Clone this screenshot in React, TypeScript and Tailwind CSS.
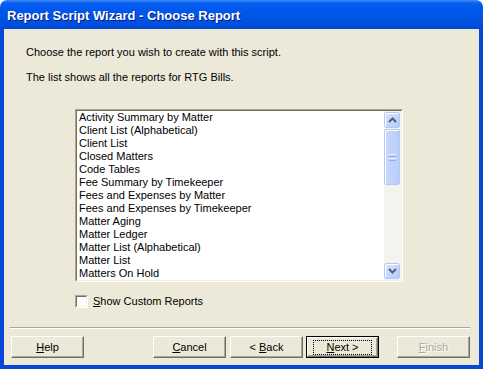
import React from 'react';

const reports = [
  'Activity Summary by Matter',
  'Client List (Alphabetical)',
  'Client List',
  'Closed Matters',
  'Code Tables',
  'Fee Summary by Timekeeper',
  'Fees and Expenses by Matter',
  'Fees and Expenses by Timekeeper',
  'Matter Aging',
  'Matter Ledger',
  'Matter List (Alphabetical)',
  'Matter List',
  'Matters On Hold',
];

// classic raised push button
const Button: React.FC<{ children: React.ReactNode; disabled?: boolean; isDefault?: boolean }> = ({
  children,
  disabled,
  isDefault,
}) => {
  const inner = (
    <div className="flex h-full w-full items-center justify-center border border-t-white border-l-white border-r-[#716F64] border-b-[#716F64] bg-[#ECE9D8] shadow-[inset_-1px_-1px_0_#ACA899]">
      {isDefault ? (
        <span className="flex h-[15px] w-[59px] items-center justify-center border border-dotted border-black">
          {children}
        </span>
      ) : (
        <span className={disabled ? 'text-[#ACA899] [text-shadow:1px_1px_0_#fff]' : ''}>{children}</span>
      )}
    </div>
  );
  if (isDefault) {
    return <div className="h-[22px] w-[73px] border border-black">{inner}</div>;
  }
  return <div className="h-[22px] w-[73px]">{inner}</div>;
};

const ScrollButton: React.FC<{ up?: boolean }> = ({ up }) => (
  <div className="flex h-[16px] w-[16px] items-center justify-center rounded-[2px] border border-[#B4C8F6] bg-[linear-gradient(135deg,#D8E4FD,#B6CBF8)] shadow-[inset_1px_1px_0_#fff]">
    <svg width="9" height="6" viewBox="0 0 9 6">
      <path
        d={up ? 'M1 5 L4.5 1.5 L8 5' : 'M1 1 L4.5 4.5 L8 1'}
        fill="none"
        stroke="#4D6185"
        strokeWidth="2"
      />
    </svg>
  </div>
);

const App: React.FC = () => {
  return (
    <div className="flex h-[369px] w-[483px] flex-col bg-white font-['Liberation_Sans',Arial,sans-serif] text-[11px] leading-[13px] text-black">
      {/* Title bar */}
      <div className="flex h-[29px] items-center rounded-t-[7px] bg-[linear-gradient(to_bottom,#3C8CF9_0%,#0A5FEE_10%,#0058EE_25%,#0055E5_60%,#0050DD_85%,#0046CF_100%)] pl-[7px] pt-[2px]">
        <span className="text-[13px] font-bold text-white [text-shadow:1px_1px_0_#0A1883]">
          Report Script Wizard - Choose Report
        </span>
      </div>

      {/* Body */}
      <div className="flex flex-1 flex-col border-x-4 border-b-4 border-[#0846D8] bg-[#ECE9D8]">
        <div className="pl-[22px] pt-[17px]">
          <p>Choose the report you wish to create with this script.</p>
          <p className="mt-[12px]">The list shows all the reports for RTG Bills.</p>
        </div>

        {/* Report list */}
        <div className="ml-[71px] mt-[25px] h-[173px] w-[328px] border border-t-[#ACA899] border-l-[#ACA899] border-b-white border-r-white">
          <div className="flex h-full w-full border border-t-[#716F64] border-l-[#716F64] border-b-[#F1EFE2] border-r-[#F1EFE2] bg-white">
            <ul className="flex-1 overflow-hidden pl-[2px]">
              {reports.map((r) => (
                <li key={r} className="h-[13px] whitespace-nowrap">
                  {r}
                </li>
              ))}
            </ul>
            <div className="flex w-[17px] flex-col bg-[#F4F3EE] pt-[1px] pb-[1px]">
              <ScrollButton up />
              <div className="mt-[1px] flex h-[56px] w-[16px] items-center justify-center rounded-[2px] border border-[#B4C8F6] bg-[linear-gradient(to_right,#C9D8FC,#B8CCF9)] shadow-[inset_1px_1px_0_#fff]">
                <div className="flex flex-col gap-[1px]">
                  <div className="h-[1px] w-[7px] bg-[#EEF4FE]" />
                  <div className="h-[1px] w-[7px] bg-[#8CB0F8]" />
                  <div className="h-[1px] w-[7px] bg-[#EEF4FE]" />
                  <div className="h-[1px] w-[7px] bg-[#8CB0F8]" />
                </div>
              </div>
              <div className="flex-1" />
              <ScrollButton />
            </div>
          </div>
        </div>

        {/* Checkbox */}
        <div className="ml-[71px] mt-[13px] flex items-center gap-[5px]">
          <div className="h-[13px] w-[13px] border border-t-[#ACA899] border-l-[#ACA899] border-b-white border-r-white">
            <div className="h-full w-full border border-t-[#716F64] border-l-[#716F64] border-b-[#F1EFE2] border-r-[#F1EFE2] bg-white" />
          </div>
          <span>
            <u>S</u>how Custom Reports
          </span>
        </div>

        {/* Separator */}
        <div className="ml-[6px] mr-[9px] mt-[19px] h-[2px] border-t border-b border-t-[#ACA899] border-b-white" />

        {/* Buttons */}
        <div className="ml-[7px] mt-[7px] flex items-center">
          <Button>
            <u>H</u>elp
          </Button>
          <div className="ml-[69px]">
            <Button>
              <u>C</u>ancel
            </Button>
          </div>
          <div className="ml-[4px]">
            <Button>
              &lt; <u>B</u>ack
            </Button>
          </div>
          <div className="ml-[3px]">
            <Button isDefault>
              <u>N</u>ext &gt;
            </Button>
          </div>
          <div className="ml-[18px]">
            <Button disabled>
              <u>F</u>inish
            </Button>
          </div>
        </div>
      </div>
    </div>
  );
};

export default App;
